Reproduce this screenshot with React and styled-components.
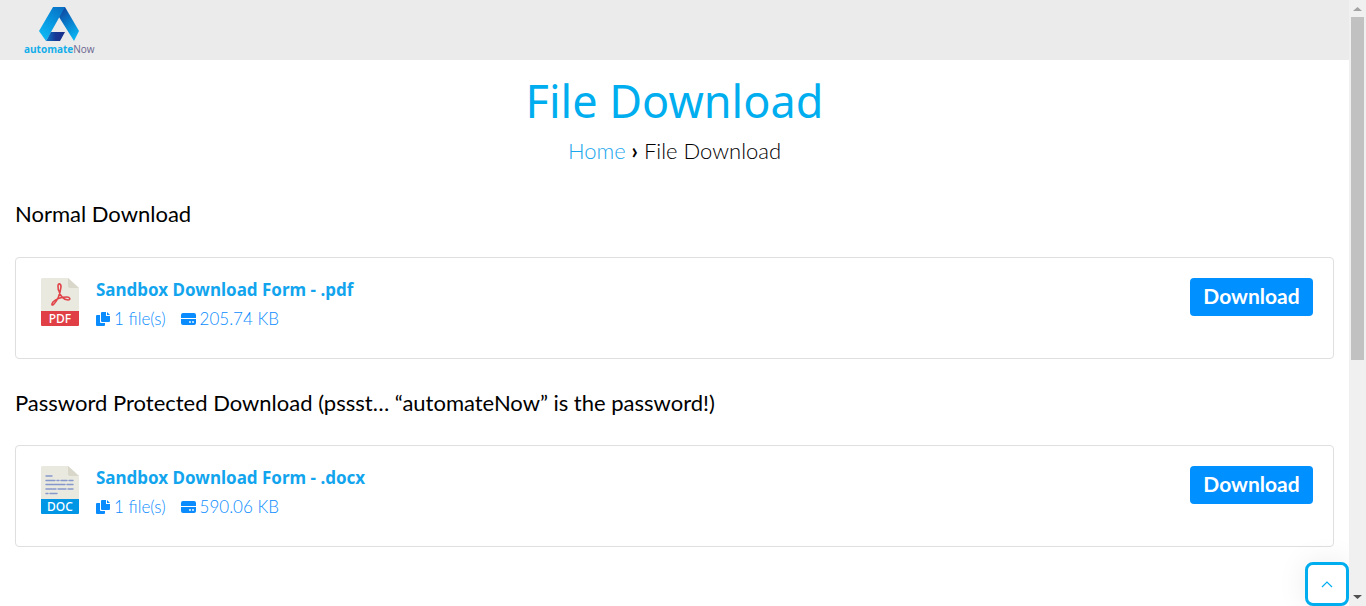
import React from "react";
import styled, { createGlobalStyle } from "styled-components";

const GlobalStyle = createGlobalStyle`
  *, *::before, *::after { box-sizing: border-box; }
  html, body { margin: 0; padding: 0; background: #fff; }
  body { font-family: Lato, "Liberation Sans", sans-serif; color: #000; }
  a { text-decoration: none; }
`;

const Shell = styled.div`
  display: flex;
  height: 100vh;
  overflow: hidden;
`;

const Page = styled.div`
  flex: 1;
  min-width: 0;
`;

const Header = styled.header`
  display: flex;
  align-items: flex-end;
  height: 60px;
  padding: 0 24px 4px;
  background: #ebebeb;
`;

const Brand = styled.a`
  display: flex;
  flex-direction: column;
  align-items: center;
  color: #6b6690;
  font: 400 10px/14px "Open Sans", sans-serif;
  b { color: #12aeea; font-weight: 700; }
  svg { display: block; }
`;

const Hero = styled.div`
  display: flex;
  flex-direction: column;
  align-items: center;
  padding-top: 11px;
`;

const Title = styled.h1`
  margin: 0;
  color: #00aeef;
  font: 400 45px/60px "Noto Sans", sans-serif;
`;

const Crumbs = styled.nav`
  display: flex;
  gap: 6px;
  margin-top: 5px;
  font-size: 22px;
  font-weight: 300;
  line-height: 30px;
  a { color: #1ba7ee; }
  b { font-weight: 700; }
`;

const Content = styled.main`
  padding: 0 15px;
`;

const SectionTitle = styled.h2`
  margin: 0;
  padding: ${({ $first }) => ($first ? "33px 0 28px" : "29px 0 27px")};
  font-size: 22px;
  font-weight: 400;
  line-height: 30px;
`;

const Card = styled.article`
  display: flex;
  align-items: flex-start;
  min-height: 102px;
  padding: 20px;
  border: 1px solid #dfdfdf;
  border-radius: 4px;
`;

const FileIcon = styled.svg`
  flex: none;
  width: 38px;
  height: 48px;
  margin: 0 17px 0 5px;
`;

const Info = styled.div`
  flex: 1;
`;

const FileTitle = styled.h3`
  margin: 0;
  font: 700 17px/24px "Noto Sans", sans-serif;
  a { color: #12a5ee; }
`;

const Meta = styled.div`
  display: flex;
  gap: 15px;
  margin-top: 5px;
  color: #0a8cff;
  font-size: 17px;
  font-weight: 300;
  line-height: 24px;
`;

const MetaItem = styled.span`
  display: flex;
  align-items: center;
  gap: 4px;
`;

const DownloadButton = styled.button`
  height: 38px;
  padding: 0 12px 2px;
  border: 0;
  border-radius: 4px;
  background: #0090ff;
  color: #fff;
  font: 700 21px/30px Lato, sans-serif;
  min-width: 123px;
  cursor: pointer;
`;

const ToTop = styled.button`
  position: fixed;
  right: 17px;
  bottom: 0;
  display: grid;
  place-items: center;
  width: 44px;
  height: 44px;
  padding: 0;
  border: 3px solid #00aeef;
  border-radius: 8px;
  background: #fff;
  box-shadow: 0 0 30px rgba(0, 0, 0, 0.08);
`;

const ScrollTrack = styled.div`
  position: relative;
  z-index: 1;
  display: flex;
  flex-direction: column;
  width: 17px;
  background: #f0f0f0;
`;

const ScrollArrow = styled.svg`
  flex: none;
  width: 17px;
  height: 17px;
`;

const ScrollRail = styled.div`
  flex: 1;
  padding: 0 2px;
`;

const ScrollThumb = styled.div`
  height: 60%;
  background: #c1c1c1;
`;

function Logo() {
  return (
    <svg width="40" height="36" viewBox="0 0 40 36" aria-hidden="true">
      <defs>
        <linearGradient id="left" x1="0.8" y1="0" x2="0.2" y2="1">
          <stop offset="0" stopColor="#0872c6" />
          <stop offset="0.5" stopColor="#0799e2" />
          <stop offset="1" stopColor="#10baf4" />
        </linearGradient>
        <linearGradient id="right" x1="0.2" y1="0" x2="0.8" y2="1">
          <stop offset="0" stopColor="#123a94" />
          <stop offset="0.5" stopColor="#087bcb" />
          <stop offset="1" stopColor="#0bb9f5" />
        </linearGradient>
        <linearGradient id="bar" x1="0" y1="0" x2="1" y2="0">
          <stop offset="0" stopColor="#0879ca" />
          <stop offset="0.5" stopColor="#173895" />
          <stop offset="1" stopColor="#19308b" />
        </linearGradient>
      </defs>
      <path d="M14 1h12l14 24-5 10-15-24z" fill="url(#right)" />
      <path d="M14 1h12L7 35 0 25z" fill="url(#left)" />
      <path d="M12 26h14l-5 9H7z" fill="url(#bar)" />
    </svg>
  );
}

function PdfIcon() {
  return (
    <FileIcon viewBox="0 0 38 48" role="img" aria-label="PDF">
      <path d="M1 0h26l11 10v24H0V1z" fill="#e9e9e0" />
      <path d="M27 0v8q0 2 2 2h9z" fill="#d9d7ca" />
      <path
        d="M18 13c1 5 5 9 9 9 3 0 2-3-1-3-6 0-11 2-14 5-2 3-1 4 1 2 4-4 6-10 7-17 0-4-3-4-3-1 0 2 0 4 1 5z"
        fill="none"
        stroke="#e04348"
        strokeWidth="1.6"
        strokeLinejoin="round"
      />
      <path d="M0 33h38v14q0 1-1 1H1q-1 0-1-1z" fill="#e04045" />
      <text x="19" y="45" textAnchor="middle" fill="#fff" fontFamily="Noto Sans, sans-serif" fontSize="12" fontWeight="500">PDF</text>
    </FileIcon>
  );
}

function DocIcon() {
  return (
    <FileIcon viewBox="0 0 38 48" role="img" aria-label="DOC">
      <path d="M1 0h26l11 10v24H0V1z" fill="#e9e9e0" />
      <path d="M27 0v8q0 2 2 2h9z" fill="#d9d7ca" />
      <path
        d="M5 10h6M5 14.500h9M16 14.500h2M20 14.500h6M28 14.500h4M5 18.500h19M26 18.500h6M5 23h6M12 23h3M17 23h8M27 23h5M5 27.500h2M9 27.500h7"
        stroke="#8697cb"
        strokeWidth="1.4"
        strokeLinecap="round"
      />
      <path d="M0 33h38v14q0 1-1 1H1q-1 0-1-1z" fill="#0096e6" />
      <text x="19" y="45" textAnchor="middle" fill="#fff" fontFamily="Noto Sans, sans-serif" fontSize="12" fontWeight="500">DOC</text>
    </FileIcon>
  );
}

function CopyGlyph() {
  return (
    <svg width="14" height="14" viewBox="0 0 14 14" fill="currentColor" aria-hidden="true">
      <path d="M6 0h4v4h4v5q0 1-1 1H6q-1 0-1-1V1q0-1 1-1z" />
      <path d="M11 0l3 3h-3z" />
      <path d="M1 3h3v7q0 1 1 1h4v2q0 1-1 1H1q-1 0-1-1V4q0-1 1-1z" />
    </svg>
  );
}

function DriveGlyph() {
  return (
    <svg width="15" height="14" viewBox="0 0 15 14" aria-hidden="true">
      <path d="M2 1h11q2 0 2 2v3H0V3q0-2 2-2zM0 7h15v4q0 2-2 2H2q-2 0-2-2z" fill="currentColor" />
      <circle cx="9" cy="10" r="0.900" fill="#fff" />
      <circle cx="12" cy="10" r="0.900" fill="#fff" />
    </svg>
  );
}

function DownloadCard({ icon, name, size }) {
  return (
    <Card>
      {icon}
      <Info>
        <FileTitle><a href="#file">{name}</a></FileTitle>
        <Meta>
          <MetaItem><CopyGlyph />1 file(s)</MetaItem>
          <MetaItem><DriveGlyph />{size}</MetaItem>
        </Meta>
      </Info>
      <DownloadButton type="button">Download</DownloadButton>
    </Card>
  );
}

export default function App() {
  return (
    <>
      <GlobalStyle />
      <Shell>
        <Page>
          <Header>
            <Brand href="#home">
              <Logo />
              <span><b>automate</b>Now</span>
            </Brand>
          </Header>
          <Hero>
            <Title>File Download</Title>
            <Crumbs aria-label="Breadcrumb">
              <a href="#home">Home</a>
              <b>›</b>
              <span>File Download</span>
            </Crumbs>
          </Hero>
          <Content>
            <SectionTitle $first>Normal Download</SectionTitle>
            <DownloadCard icon={<PdfIcon />} name="Sandbox Download Form - .pdf" size="205.74 KB" />
            <SectionTitle>Password Protected Download (pssst… “automateNow” is the password!)</SectionTitle>
            <DownloadCard icon={<DocIcon />} name="Sandbox Download Form - .docx" size="590.06 KB" />
          </Content>
        </Page>
        <ScrollTrack aria-hidden="true">
          <ScrollArrow viewBox="0 0 17 17"><path d="M4 11l4.500-4L13 11z" fill="#a3a3a3" /></ScrollArrow>
          <ScrollRail><ScrollThumb /></ScrollRail>
          <ScrollArrow viewBox="0 0 17 17"><path d="M4 6l4.500 4L13 6z" fill="#505050" /></ScrollArrow>
        </ScrollTrack>
      </Shell>
      <ToTop type="button" aria-label="Back to top">
        <svg width="12" height="8" viewBox="0 0 12 8" fill="none" stroke="#00aeef" strokeWidth="1.200" aria-hidden="true">
          <path d="M1 7l5-5 5 5" />
        </svg>
      </ToTop>
    </>
  );
}
